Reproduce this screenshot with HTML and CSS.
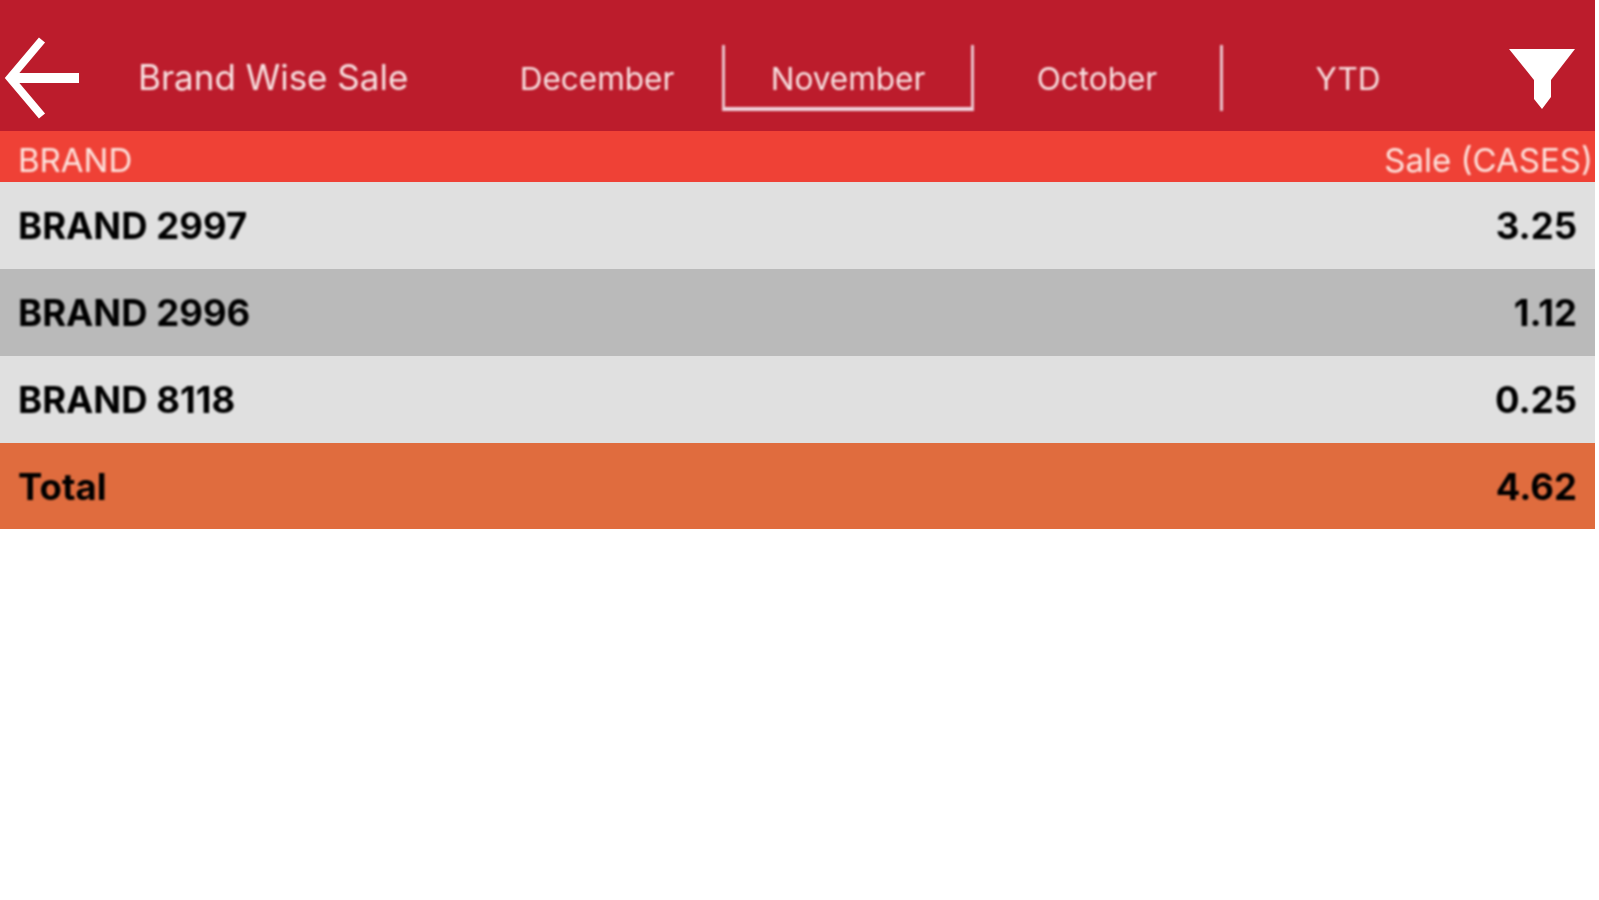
FILE: index.html
```html
<!DOCTYPE html>
<html lang="en">
<head>
<meta charset="utf-8">
<title>Brand Wise Sale</title>
<link rel="stylesheet" href="styles.css">
</head>
<body>
<div class="app">
  <header class="topbar">
    <svg class="back" width="76" height="82" viewBox="0 0 76 82"><path d="M38 3 L6 41 L38 79" fill="none" stroke="#fff" stroke-width="8"/><path d="M8 36 H75 V46 H8 Z" fill="#fff"/></svg>
    <div class="title">Brand Wise Sale</div>
    <nav class="tabs">
      <div class="tab">December</div>
      <div class="tab active"><span class="tab-label">November</span></div>
      <div class="tab sep">October</div>
      <div class="tab">YTD</div>
    </nav>
    <svg class="filter" width="66" height="62" viewBox="0 0 66 62"><path d="M0 2 H66 L42 33 V50 L33 62 L25 52 V33 Z" fill="#fff"/></svg>
  </header>
  <div class="heading">
    <span>BRAND</span>
    <span>Sale (CASES)</span>
  </div>
  <div class="row light"><span>BRAND 2997</span><span>3.25</span></div>
  <div class="row dark"><span>BRAND 2996</span><span>1.12</span></div>
  <div class="row light"><span>BRAND 8118</span><span>0.25</span></div>
  <div class="row total"><span>Total</span><span>4.62</span></div>
</div>
</body>
</html>
```
FILE: styles.css
```css
* { box-sizing: border-box; }
html, body { margin: 0; padding: 0; background: #fff; }
body { font-family: Inter, "Liberation Sans", Arial, sans-serif; }
.app { width: 1595px; }
.topbar {
  height: 131px;
  background: #bc1c2c;
  display: flex;
  align-items: center;
  color: #f8e2e2;
  padding-top: 24px;
}
.back { margin-left: 4px; flex: none; filter: blur(0.6px); }
.title {
  margin-left: 58px;
  width: 334px;
  flex: none;
  font-size: 35px;
  line-height: 42px;
  padding-bottom: 2px;
  white-space: nowrap;
  filter: blur(0.9px);
}
.tabs { display: flex; height: 66px; flex: none; }
.tab {
  width: 250px;
  display: flex;
  align-items: center;
  justify-content: center;
  font-size: 31.5px;
  padding-top: 2px;
  filter: blur(0.9px);
}
.tab.active {
  border-left: 3px solid #e9c4cc;
  border-right: 3px solid #e9c4cc;
  border-bottom: 4px solid #f0d4de;
  width: 252px;
  padding-top: 6px;
}
.tab.sep { border-right: 3px solid #e9c4cc; width: 249px; }
.filter { margin-left: 36px; flex: none; filter: blur(0.6px); }
.heading {
  height: 51px;
  background: #ef4136;
  color: #fde4de;
  display: flex;
  justify-content: space-between;
  align-items: center;
  padding: 6px 2px 0 18px;
  font-size: 33px;
}
.heading span { filter: blur(0.9px); }
.row {
  height: 87px;
  display: flex;
  justify-content: space-between;
  align-items: center;
  padding: 1px 18px 0;
  font-size: 36.5px;
  font-weight: 700;
  color: #000;
}
.row span { filter: blur(0.8px); }
.light { background: #e0e0e0; }
.dark { background: #bababa; }
.total { background: #e06c3e; height: 86px; }
```
